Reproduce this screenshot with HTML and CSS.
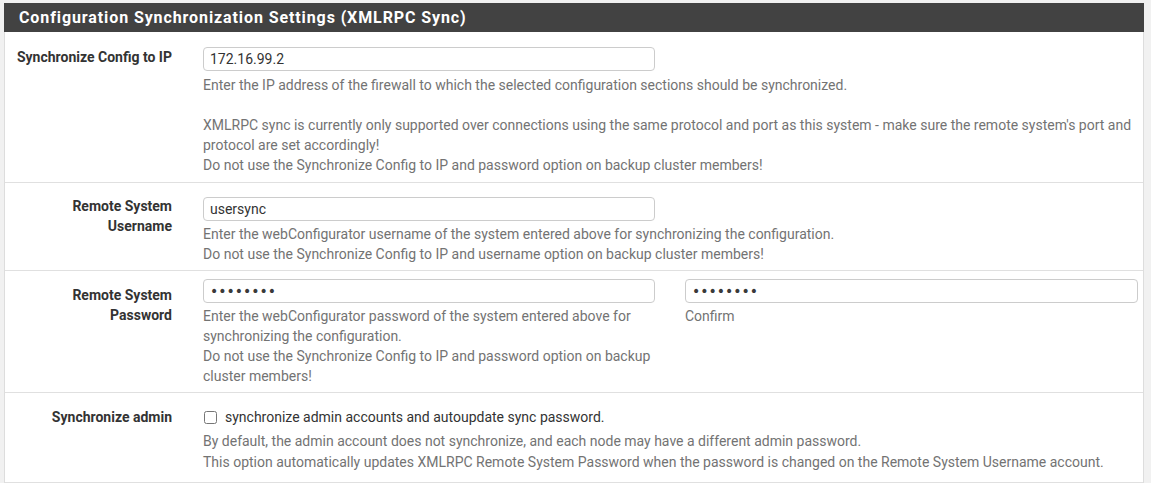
FILE: index.html
```html
<!DOCTYPE html>
<html>
<head>
<meta charset="utf-8">
<link rel="stylesheet" href="styles.css">
</head>
<body>
<div class="panel">
  <div class="panel-heading"><h2 class="panel-title">Configuration Synchronization Settings (XMLRPC Sync)</h2></div>
  <div class="panel-body">
    <div class="form-row row-ip">
      <label class="row-label">Synchronize Config to IP</label>
      <div class="row-content">
        <input class="text-input half" type="text" value="172.16.99.2">
        <div class="help">Enter the IP address of the firewall to which the selected configuration sections should be synchronized.<br><br>XMLRPC sync is currently only supported over connections using the same protocol and port as this system - make sure the remote system's port and protocol are set accordingly!<br>Do not use the Synchronize Config to IP and password option on backup cluster members!</div>
      </div>
    </div>
    <div class="form-row row-user">
      <label class="row-label">Remote System Username</label>
      <div class="row-content">
        <input class="text-input half" type="text" value="usersync">
        <div class="help">Enter the webConfigurator username of the system entered above for synchronizing the configuration.<br>Do not use the Synchronize Config to IP and username option on backup cluster members!</div>
      </div>
    </div>
    <div class="form-row row-pass">
      <label class="row-label">Remote System Password</label>
      <div class="row-content split">
        <div class="col">
          <input class="text-input pw" type="password" value="abcdefgh">
          <div class="help">Enter the webConfigurator password of the system entered above for synchronizing the configuration.<br>Do not use the Synchronize Config to IP and password option on backup cluster members!</div>
        </div>
        <div class="col">
          <input class="text-input pw" type="password" value="abcdefgh">
          <div class="help">Confirm</div>
        </div>
      </div>
    </div>
    <div class="form-row row-admin">
      <label class="row-label">Synchronize admin</label>
      <div class="row-content">
        <label class="check"><input type="checkbox" class="cb"> synchronize admin accounts and autoupdate sync password.</label>
        <div class="help">By default, the admin account does not synchronize, and each node may have a different admin password.<br>This option automatically updates XMLRPC Remote System Password when the password is changed on the Remote System Username account.</div>
      </div>
    </div>
  </div>
</div>
</body>
</html>
```
FILE: styles.css
```css
html, body {
  margin: 0;
  padding: 0;
}
body {
  background: #f1f1f1;
  padding: 3px 7px 0 4px;
  font-family: Roboto, "Liberation Sans", sans-serif;
  font-size: 14px;
  color: #333;
}
.panel {
  background: #fff;
  border: 1px solid #dddddd;
  border-top: 0;
}
.panel-heading {
  background: #424242;
  height: 29px;
  padding: 0 15px;
  display: flex;
  align-items: center;
  margin: 0 -1px;
}
.panel-title {
  margin: 0;
  color: #fff;
  font-size: 16px;
  font-weight: 700;
  letter-spacing: 0.9px;
  line-height: 20px;
}
.form-row {
  display: grid;
  grid-template-columns: 167px 1fr;
  column-gap: 31px;
  padding: 13px 5px 7px 0;
  border-bottom: 1px solid #e0e0e0;
}
.row-label {
  text-align: right;
  font-weight: 700;
  line-height: 20px;
  padding-left: 11px;
}
.row-ip {
  padding-top: 14px;
}
.row-ip .row-label {
  padding-top: 1px;
}
.row-ip .help {
  margin-top: 4px;
}
.row-user {
  padding-bottom: 6px;
}
.text-input {
  box-sizing: border-box;
  display: block;
  height: 24px;
  margin: 1px 0 0;
  border: 1px solid #cccccc;
  border-radius: 4px;
  padding: 0 6px;
  font-family: Roboto, "Liberation Sans", sans-serif;
  font-size: 14px;
  color: #333;
  outline: none;
  width: 100%;
}
.text-input.pw {
  font-family: "DejaVu Sans", sans-serif;
  font-size: 14px;
  color: #3a3a3a;
}
.text-input.half {
  width: 452px;
}
.help {
  color: #737373;
  line-height: 20px;
  margin-top: 3px;
}
.row-pass {
  padding-top: 14px;
  padding-bottom: 6px;
}
.row-pass .text-input {
  margin-top: -6px;
}
.split {
  display: grid;
  grid-template-columns: 452px 1fr;
  column-gap: 30px;
}
.row-admin {
  padding-top: 14px;
  padding-bottom: 10px;
}
.check {
  display: flex;
  align-items: center;
  line-height: 20px;
  color: #333;
}
.cb {
  width: 13px;
  height: 13px;
  margin: 0 8px 0 1px;
}
.row-admin .help {
  margin-top: 4px;
  line-height: 20.5px;
}
```
